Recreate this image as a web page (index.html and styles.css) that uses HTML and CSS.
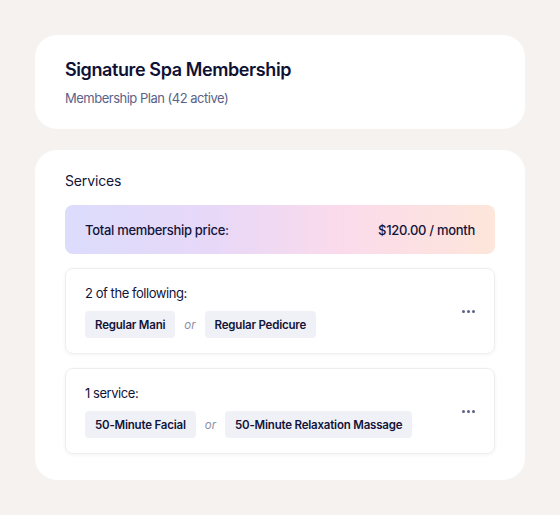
FILE: index.html
```html
<!DOCTYPE html>
<html lang="en">
<head>
<meta charset="utf-8">
<title>Signature Spa Membership</title>
<link rel="stylesheet" href="styles.css">
</head>
<body>
<main class="page">
  <section class="card header-card">
    <h1 class="title">Signature Spa Membership</h1>
    <p class="subtitle">Membership Plan (42 active)</p>
  </section>
  <section class="card services-card">
    <h2 class="section-title">Services</h2>
    <div class="price-bar">
      <span>Total membership price:</span>
      <span>$120.00 / month</span>
    </div>
    <div class="group">
      <div class="group-body">
        <div class="group-label">2 of the following:</div>
        <div class="chips">
          <span class="chip">Regular Mani</span>
          <span class="or">or</span>
          <span class="chip">Regular Pedicure</span>
        </div>
      </div>
      <button class="more" aria-label="More options"><i></i><i></i><i></i></button>
    </div>
    <div class="group">
      <div class="group-body">
        <div class="group-label">1 service:</div>
        <div class="chips">
          <span class="chip">50-Minute Facial</span>
          <span class="or">or</span>
          <span class="chip">50-Minute Relaxation Massage</span>
        </div>
      </div>
      <button class="more" aria-label="More options"><i></i><i></i><i></i></button>
    </div>
  </section>
</main>
</body>
</html>
```
FILE: styles.css
```css
* { box-sizing: border-box; }
html, body { margin: 0; padding: 0; }
body {
  background: #f5f2f0;
  font-family: Inter, "Noto Sans", sans-serif;
  color: #12143a;
}
.page {
  padding: 35px 35px;
  display: flex;
  flex-direction: column;
  gap: 21px;
}
.card {
  background: #ffffff;
  border-radius: 22px;
  padding: 0 30px;
}
.header-card {
  padding-top: 24px;
  padding-bottom: 22px;
}
.title {
  margin: 0;
  font-size: 18px;
  line-height: 22px;
  font-weight: 600;
  letter-spacing: -0.4px;
  color: #0f1134;
}
.subtitle {
  margin: 8px 0 0;
  font-size: 13px;
  line-height: 18px;
  color: #5b6288;
  letter-spacing: -0.5px;
}
.services-card {
  padding-top: 21px;
  padding-bottom: 26px;
  display: flex;
  flex-direction: column;
}
.section-title {
  margin: 0;
  font-size: 14px;
  line-height: 20px;
  font-weight: 400;
  letter-spacing: -0.15px;
}
.price-bar {
  margin-top: 14px;
  height: 49px;
  border-radius: 8px;
  padding: 0 20px;
  display: flex;
  align-items: center;
  justify-content: space-between;
  font-size: 13px;
  font-weight: 500;
  letter-spacing: -0.3px;
  background: linear-gradient(90deg, #dcdcfc 0%, #e8d8f8 35%, #fbdbeb 65%, #fde6da 100%);
}
.group {
  margin-top: 14px;
  border: 1px solid #eeeef2;
  border-radius: 8px;
  box-shadow: 0 1px 4px rgba(20, 20, 60, 0.05);
  padding: 15px 19px;
  display: flex;
  align-items: center;
  justify-content: space-between;
}
.group-label {
  font-size: 13px;
  line-height: 18px;
  letter-spacing: -0.45px;
}
.chips {
  margin-top: 9px;
  display: flex;
  align-items: center;
  gap: 9px;
}
.chip {
  background: #f0f1f6;
  border-radius: 4px;
  height: 27px;
  padding: 0 10px;
  display: inline-flex;
  align-items: center;
  font-size: 11.5px;
  font-weight: 600;
  letter-spacing: -0.2px;
}
.or {
  font-size: 11.5px;
  font-style: italic;
  color: #8b90a8;
}
.more {
  background: none;
  border: 0;
  padding: 0;
  display: flex;
  gap: 2px;
  cursor: pointer;
}
.more i {
  width: 3px;
  height: 3px;
  border-radius: 50%;
  background: #5b6288;
}
```
